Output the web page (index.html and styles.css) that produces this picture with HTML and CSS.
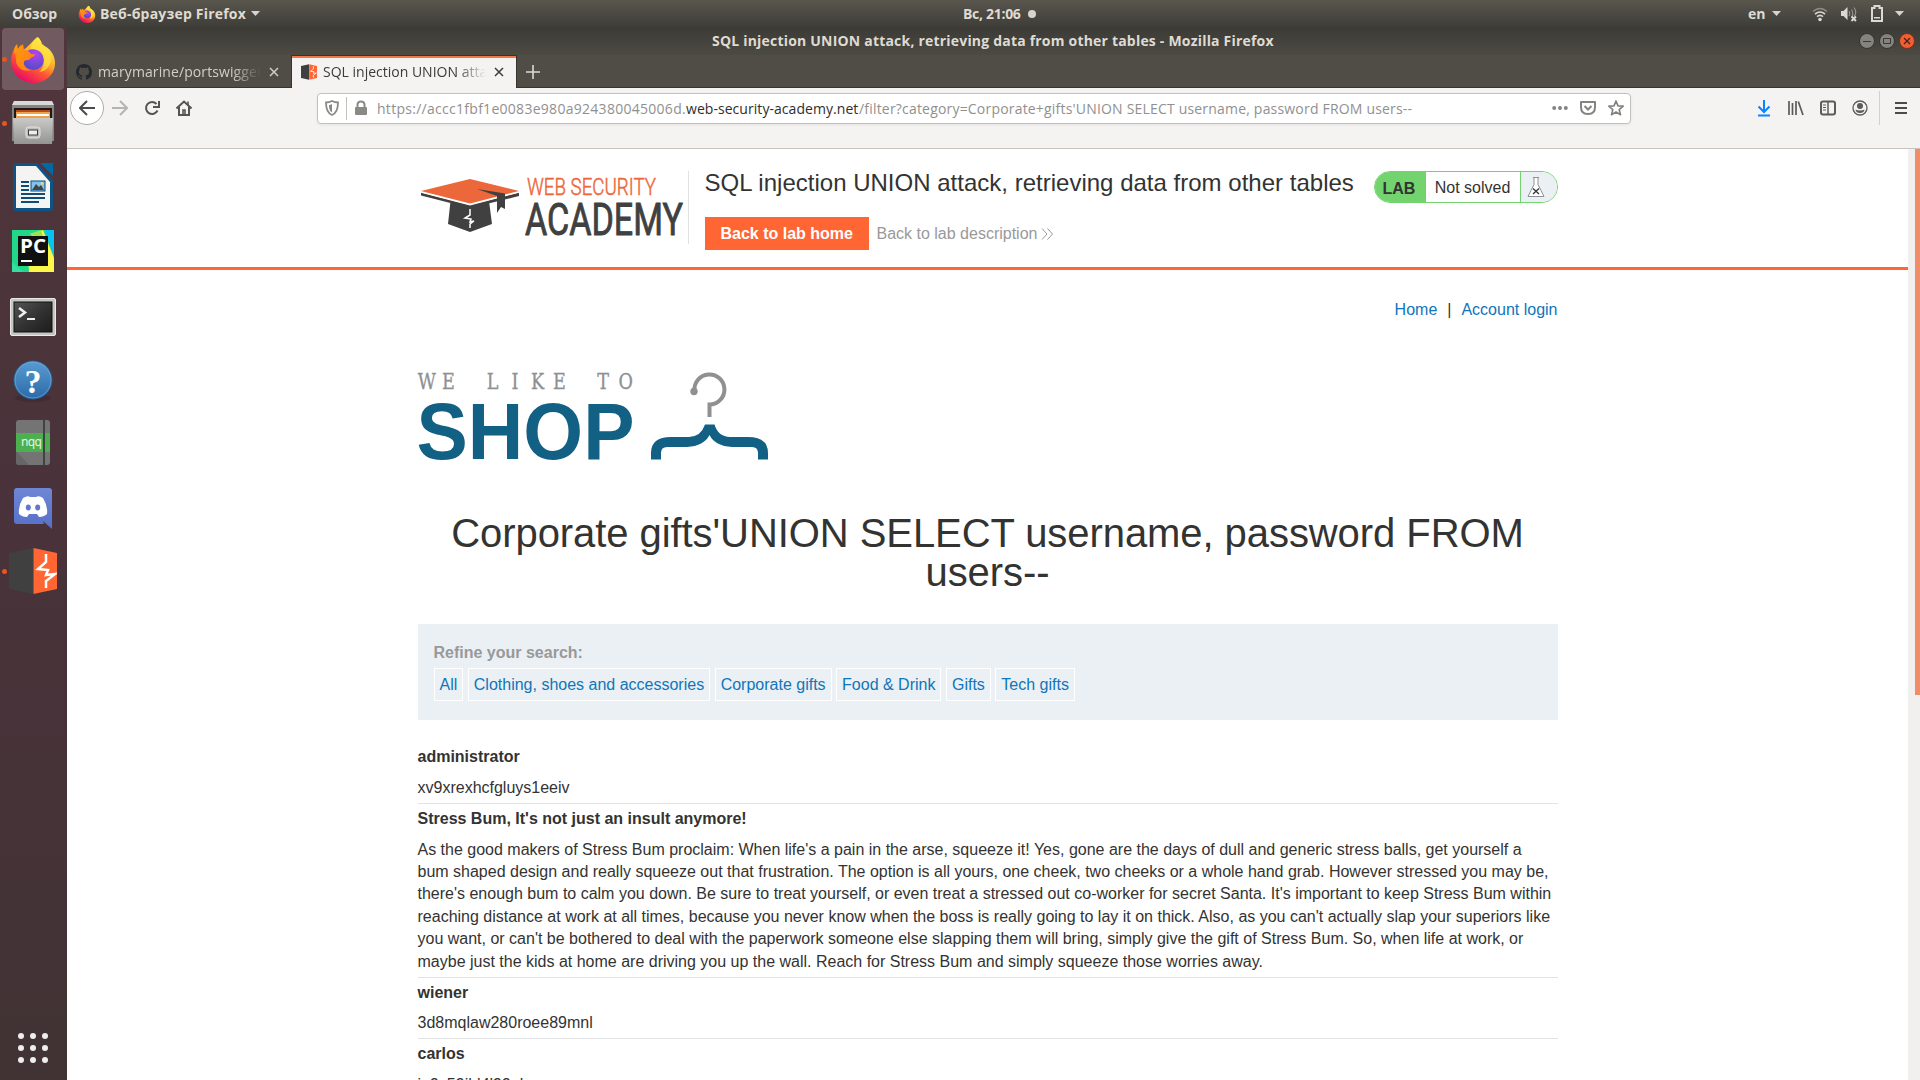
FILE: index.html
```html
<!DOCTYPE html>
<html lang="ru">
<head>
<meta charset="utf-8">
<title>SQL injection UNION attack, retrieving data from other tables</title>
<link rel="stylesheet" href="styles.css">
</head>
<body>
<svg class="defs" width="0" height="0" aria-hidden="true">
  <defs>
    <linearGradient id="ff-body" x1=".8" y1=".1" x2=".25" y2="1"><stop offset="0" stop-color="#fff44f"/><stop offset=".35" stop-color="#ffb02a"/><stop offset=".6" stop-color="#ff5634"/><stop offset="1" stop-color="#e5006e"/></linearGradient>
    <radialGradient id="ff-globe" cx=".6" cy=".25" r=".8"><stop offset="0" stop-color="#b343f2"/><stop offset="1" stop-color="#4b4dc4"/></radialGradient>
    <linearGradient id="ff-fox" x1="0" y1="0" x2="1" y2=".6"><stop offset="0" stop-color="#ff980e"/><stop offset="1" stop-color="#ff8116"/></linearGradient>
    <linearGradient id="steel" x2="0" y2="1"><stop offset="0" stop-color="#c9c9c8"/><stop offset="1" stop-color="#949493"/></linearGradient>
    <linearGradient id="term" x2="1" y2="1"><stop offset="0" stop-color="#555"/><stop offset=".5" stop-color="#333"/><stop offset="1" stop-color="#1c1c1c"/></linearGradient>
    <linearGradient id="help" x2="0" y2="1"><stop offset="0" stop-color="#5b9bd2"/><stop offset="1" stop-color="#2a6ba8"/></linearGradient>
    <linearGradient id="disc" x2="0" y2="1"><stop offset="0" stop-color="#6f86d4"/><stop offset="1" stop-color="#5570c8"/></linearGradient>
    <symbol id="firefox" viewBox="0 0 48 48">
      <path d="M29 2c2 2 4 5 4 8 7 2 13 9 13 18 0 12-10 20-21.500 20S2 39 2 26c0-6 2-11 5-15l1 4 4-5 2 5 3-2c4-3 6-7 12-11z" fill="url(#ff-body)"/>
      <circle cx="24.500" cy="24.500" r="10.500" fill="url(#ff-globe)"/>
      <path d="M5 16c0-3 1-5 3-7l1 5 5-5 1 6c3 0 5 1 7 4 2 0 4 0 4 1-1 2-4 2-5 4-2 2-5 0-6 3-1 4 3 8 8 8-9 3-16-3-16-10 0-4-1-6-2-9z" fill="url(#ff-fox)"/>
      <path d="M28 2c-4 4-6 7-6 12 7 0 13 4 13 12 0 5-2 9-5 11 8-1 12-7 12-14 0-7-6-10-8-14-1 1-5-2-6-7z" fill="#ffe141" opacity=".75"/>
    </symbol>
    <symbol id="burp" viewBox="0 0 48 46">
      <path d="M0 5 24 0v46L0 41z" fill="#404041"/><path d="M24.500 0 48 5v36l-23.500 5z" fill="#ff6633"/>
      <path d="M37 6v8l-8 7 10 1-2 5 9-1-9 7v7" fill="none" stroke="#fff" stroke-width="2.500"/>
    </symbol>
  </defs>
</svg>

<header class="panel">
  <span class="activities">Обзор</span>
  <svg class="app-icon" width="18" height="18"><use href="#firefox"/></svg>
  <span class="app-name">Веб-браузер Firefox</span>
  <i class="tri"></i>
  <div class="clock"><span class="clock-text">Вс, 21:06</span><i class="clock-dot"></i></div>
  <div class="tray">
    <span class="lang">en</span><i class="tri"></i>
    <svg class="tray-wifi" width="16" height="16" viewBox="0 0 16 16" fill="none" stroke="#dad9d6" stroke-width="1.600"><path d="M1 5.500q7-6 14 0" opacity=".45"/><path d="M3 8.200q5-4.400 10 0M5 10.700q3-2.600 6 0"/><circle cx="8" cy="13.500" r="1.800" fill="#dad9d6" stroke="none"/></svg>
    <svg class="tray-vol" width="18" height="16" viewBox="0 0 18 16"><path d="M1 5h2.500L7.500 1v13l-4-4H1z" fill="#dad9d6"/><path d="M9 5q1.500 2.500 0 5M11.500 3.500q2.500 4 0 8M14 1.500q3.500 5 0 9" fill="none" stroke="#dad9d6" stroke-width="1.200" opacity=".5"/><path d="m11.500 10.500 4.500 4.500m0-4.500-4.500 4.500" stroke="#dad9d6" stroke-width="1.800"/></svg>
    <svg class="tray-bat" width="12" height="17" viewBox="0 0 12 17"><path d="M1 3h2.500V1h5v2H11v13H1z" fill="none" stroke="#dad9d6" stroke-width="2"/><path d="M3 12h6v1.500H3z" fill="#dad9d6"/></svg>
    <i class="tri"></i>
  </div>
</header>

<div class="desktop">
  <nav class="dock">
    <div class="dock-item running focused"><svg width="48" height="48"><use href="#firefox"/></svg></div>
    <div class="dock-item running"><svg width="48" height="48" viewBox="0 0 48 48">
      <path d="M5 2h38l2 5v35H3V7z" fill="#858584"/><path d="M5 2h38l2 4H3z" fill="#d8d8d6"/><path d="M5 9h38v13H5z" fill="#201a16"/><path d="M7 11h34v9H7z" fill="#b9481d"/><path d="M7 13h34v7H7z" fill="#f0a04b"/><path d="M8 15h32v2H8z" fill="#fff"/><path d="M4 19h40l-1 26H5z" fill="url(#steel)"/>
      <rect x="17" y="28" width="14" height="11" rx="2.500" fill="#bfbfbe" stroke="#e4e4e3"/><rect x="19.500" y="31" width="9" height="5" fill="#eee" stroke="#3a3a3a"/></svg></div>
    <div class="dock-item"><svg width="48" height="48" viewBox="0 0 48 48">
      <path d="M7 0h24l13 13v32q0 3-3 3H7q-3 0-3-3V3q0-3 3-3z" fill="#0e5384"/><path d="M31 0h13v13z" fill="#0369a3"/><path d="M28 0h3l13 13v4z" fill="#53353b"/><path d="M7 3h20l14 16v26H7z" fill="#f4f4f3"/>
      <path d="M12 19h8M12 23h8M12 27h8M12 31h24M12 35h24M12 39h18" stroke="#0e4d7a" stroke-width="2"/><rect x="22" y="18" width="14" height="10" fill="#7fc3ee" stroke="#0e4d7a"/><path d="m23 27 4-6 3 3 2-2 3 5z" fill="#444"/><circle cx="33" cy="20.500" r="1.300" fill="#ffd75e"/></svg></div>
    <div class="dock-item"><svg width="48" height="48" viewBox="0 0 48 48">
      <path d="M3 3h42v42H3z" fill="#21d789"/><path d="M36 3h9v28z" fill="#07c3f2"/><path d="M18 11 34 3l11 28v14H20z" fill="#fcf84a"/><path d="M20 7 32 3l3 10z" fill="#9be34f"/><path d="M3 35 14 45H3z" fill="#34dfa0"/><path d="M9 9h30v30H9z" fill="#101010"/>
      <text x="11" y="26" class="pc-text" textLength="26" lengthAdjust="spacingAndGlyphs">PC</text><path d="M12 33h11v2H12z" fill="#fff"/></svg></div>
    <div class="dock-item"><svg width="48" height="48" viewBox="0 0 48 48">
      <rect x="1.500" y="7.500" width="45" height="37" rx="1.500" fill="#c6c6c5" stroke="#e8e8e7"/><rect x="5" y="11" width="38" height="30" fill="url(#term)" stroke="#111"/><path d="m10 17 6 4.500-6 4.500" fill="none" stroke="#eee" stroke-width="2.500"/><path d="M18 27h8v2h-8z" fill="#eee"/></svg></div>
    <div class="dock-item"><svg width="48" height="48" viewBox="0 0 48 48">
      <ellipse cx="24" cy="43" rx="18" ry="4" fill="#3a252b" opacity=".5"/><circle cx="24" cy="25" r="19" fill="url(#help)" stroke="#215f97"/><circle cx="24" cy="25" r="18" fill="none" stroke="#7db2de" opacity=".6"/><text x="24" y="37.500" class="help-text">?</text></svg></div>
    <div class="dock-item"><svg width="48" height="48" viewBox="0 0 48 48">
      <rect x="7" y="1" width="34" height="45" rx="3" fill="#747474"/><path d="M7 32 20 46H10q-3 0-3-3z" fill="#666"/><path d="M7 14h34v19H7z" fill="#4caf50"/><path d="M34 1h2v45h-2z" fill="#3f4440"/><text x="12" y="26.500" class="nqq-text" textLength="21">nqq</text></svg></div>
    <div class="dock-item"><svg width="48" height="48" viewBox="0 0 48 48">
      <path d="M8 5h32q3 0 3 3v38l-9-8 1 3H8q-3 0-3-3V8q0-3 3-3z" fill="url(#disc)"/><path d="M14 15q5-3 7-1h6q3-2 7 1 5 8 4 16-3 3-8 3l-2-3h-8l-2 3q-5 0-8-3-1-8 4-16z" fill="#fff"/><ellipse cx="19.300" cy="24.500" rx="2.500" ry="3" fill="#5f78cc"/><ellipse cx="28.700" cy="24.500" rx="2.500" ry="3" fill="#5f78cc"/></svg></div>
    <div class="dock-item running"><svg width="48" height="46"><use href="#burp"/></svg></div>
    <svg class="apps-grid" width="30" height="30" viewBox="0 0 30 30" fill="#eeeeec"><circle cx="3" cy="3" r="3"/><circle cx="15" cy="3" r="3"/><circle cx="27" cy="3" r="3"/><circle cx="3" cy="15" r="3"/><circle cx="15" cy="15" r="3"/><circle cx="27" cy="15" r="3"/><circle cx="3" cy="27" r="3"/><circle cx="15" cy="27" r="3"/><circle cx="27" cy="27" r="3"/></svg>
  </nav>

  <main class="window">
    <div class="titlebar">
      <span class="window-title">SQL injection UNION attack, retrieving data from other tables - Mozilla Firefox</span>
      <div class="window-buttons">
        <svg width="16" height="16" viewBox="0 0 16 16"><circle cx="8" cy="8" r="7.500" fill="#85837d" stroke="#34332f"/><path d="M4 8.500h8" stroke="#3a3935"/></svg>
        <svg width="16" height="16" viewBox="0 0 16 16"><circle cx="8" cy="8" r="7.500" fill="#85837d" stroke="#34332f"/><path d="M4.500 5.500h7v5h-7z" fill="none" stroke="#3a3935"/></svg>
        <svg width="16" height="16" viewBox="0 0 16 16"><circle cx="8" cy="8" r="7.500" fill="#ee6034" stroke="#7a3019"/><path d="m5 5 6 6m0-6-6 6" stroke="#4a2012" stroke-width="1.300"/></svg>
      </div>
    </div>
    <div class="tabs">
      <div class="tab">
        <svg width="16" height="16" viewBox="0 0 16 16"><path fill="#24292e" d="M8 0C3.580 0 0 3.580 0 8c0 3.540 2.290 6.530 5.470 7.590.4.070.55-.17.55-.38 0-.19-.010-.82-.010-1.490-2.010.37-2.530-.49-2.690-.94-.09-.23-.48-.94-.82-1.130-.28-.15-.68-.52-.010-.53.63-.010 1.080.58 1.230.82.72 1.210 1.870.87 2.330.66.070-.52.28-.87.51-1.070-1.780-.2-3.640-.89-3.640-3.950 0-.87.31-1.590.82-2.150-.08-.2-.36-1.020.08-2.120 0 0 .67-.21 2.200.82.64-.18 1.320-.27 2-.27s1.360.09 2 .27c1.530-1.040 2.200-.82 2.200-.82.44 1.100.16 1.920.08 2.120.51.56.82 1.270.82 2.150 0 3.070-1.870 3.750-3.650 3.950.29.25.54.73.54 1.480 0 1.070-.010 1.930-.010 2.200 0 .21.15.46.55.38A8.010 8.010 0 0 0 16 8c0-4.420-3.580-8-8-8z"/></svg>
        <span class="tab-label tab-one">marymarine/portswigger</span>
        <svg class="tab-close" width="10" height="10" viewBox="0 0 10 10"><path d="m1 1 8 8m0-8-8 8" stroke="currentColor" stroke-width="1.500"/></svg>
      </div>
      <div class="tab active">
        <svg width="16" height="16"><use href="#burp"/></svg>
        <span class="tab-label tab-two">SQL injection UNION attack</span>
        <svg class="tab-close" width="10" height="10" viewBox="0 0 10 10"><path d="m1 1 8 8m0-8-8 8" stroke="currentColor" stroke-width="1.500"/></svg>
      </div>
      <svg class="new-tab" width="14" height="14" viewBox="0 0 14 14"><path d="M7 0v14M0 7h14" stroke="#dcd9d2" stroke-width="1.600"/></svg>
    </div>
    <div class="toolbar">
      <div class="back"><svg width="16" height="16" viewBox="0 0 16 16" fill="none" stroke="#4c4b49" stroke-width="2"><path d="M16 8H1M8 1 1 8l7 7"/></svg></div>
      <svg class="forward" width="16" height="16" viewBox="0 0 16 16" fill="none" stroke="#b5b4b1" stroke-width="2"><path d="M0 8h15M8 1l7 7-7 7"/></svg>
      <svg class="reload" width="16" height="16" viewBox="0 0 16 16" fill="none" stroke="#555452" stroke-width="2"><path d="M13.500 10.500A6 6 0 1 1 12.500 4"/><path d="M15 1v6H9" /></svg>
      <svg class="home" width="16" height="16" viewBox="0 0 16 16" fill="none" stroke="#555452" stroke-width="2"><path d="M.5 8.500 8 1.500l7.500 7M3 7v8h10V7"/><path d="M7 15v-5h2v5M12 1.500V5" stroke-width="1.600"/></svg>
      <div class="urlbar">
        <svg class="shield" width="14" height="16" viewBox="0 0 14 16"><path d="M7 1q3 1.500 6 1.500C13 8.500 12 13 7 15 2 13 1 8.500 1 2.500 4 2.500 7 1 7 1z" fill="none" stroke="#8a8986" stroke-width="1.800"/><path d="M7 4v8.500C4.500 11 4 8.500 4 5q1.500 0 3-1z" fill="#8a8986"/></svg>
        <i class="url-sep"></i>
        <svg class="lock" width="14" height="16" viewBox="0 0 14 16"><path d="M3.500 8V5q0-3.500 3.500-3.500T10.500 5v3" fill="none" stroke="#8a8986" stroke-width="2"/><rect x="1" y="7" width="12" height="8" rx="1" fill="#8a8986"/></svg>
        <div class="url"><span class="url-a">https://accc1fbf1e0083e980a924380045006d.</span><span class="url-host">web-security-academy.net</span><span class="url-b">/filter?category=Corporate+gifts'UNION SELECT username, password FROM users--</span></div>
        <div class="url-actions">
          <svg width="16" height="16" viewBox="0 0 16 16" fill="#848380"><circle cx="2.200" cy="8" r="2"/><circle cx="8" cy="8" r="2"/><circle cx="13.800" cy="8" r="2"/></svg>
          <svg width="16" height="16" viewBox="0 0 16 16" fill="none" stroke="#848380" stroke-width="2"><path d="M1 2h14v5q0 7-7 7T1 7z" stroke-linejoin="round"/><path d="m4.500 6 3.500 3.500L11.500 6"/></svg>
          <svg width="16" height="16" viewBox="0 0 16 16" fill="none" stroke="#848380" stroke-width="1.700" stroke-linejoin="round"><path d="m8 1 2 4.800 5.200.4-4 3.400 1.300 5.100L8 12l-4.500 2.700 1.300-5.100-4-3.400L6 5.800z"/></svg>
        </div>
      </div>
      <div class="tools">
        <svg width="16" height="18" viewBox="0 0 16 18" fill="none" stroke="#0a84ff" stroke-width="2"><path d="M8 1v12M2.500 7.500 8 13l5.500-5.500M2 16.500h12"/></svg>
        <svg width="16" height="16" viewBox="0 0 16 16" fill="none" stroke="#5c5b59" stroke-width="1.700"><path d="M1 1v14M4.500 3v12M8 1v14M10.300 1.500 15 15"/></svg>
        <svg width="16" height="16" viewBox="0 0 16 16" fill="none" stroke="#5c5b59" stroke-width="2"><rect x="1" y="1.500" width="14" height="13" rx="2"/><path d="M8 2v12" stroke-width="1.500"/><path d="M3 5h3M3 7.500h3M3 10h3" stroke-width="1.200"/></svg>
        <svg width="16" height="16" viewBox="0 0 16 16"><circle cx="8" cy="8" r="7" fill="none" stroke="#5c5b59" stroke-width="1.300"/><circle cx="8" cy="6" r="3" fill="#5c5b59"/><path d="M3.500 9.500Q5 10.500 8 10.500t4.500-1q-.5 3.500-4.500 3.500T3.500 9.500z" fill="#5c5b59"/></svg>
        <i class="tools-sep"></i>
        <svg width="14" height="14" viewBox="0 0 14 14" stroke="#4c4b49" stroke-width="2"><path d="M1 2h12M1 7h12M1 12h12"/></svg>
      </div>
    </div>

    <div class="viewport">
      <div class="page">
        <section class="academy">
          <div class="container academy-row">
            <svg class="academy-logo" width="270" height="72" viewBox="418 171 270 72">
              <path d="M450.500 201 470 207l19-6 3 23-22 8-22-8z" fill="#404041"/>
              <path d="M421 192.500 470 205l49-12.500v3.500L470 208l-49-12.500z" fill="#404041"/>
              <path d="M420 191v1.500l50 13 50-13V191z" fill="#fff"/>
              <path d="M421 191 470 179l49 12-49 12.500z" fill="#ec683a"/>
              <path d="M477 189 505 193.500V209l-4-2-4 6v-17z" fill="#404041"/>
              <path d="M470 209v6l-5 3 6 1-1 3 4-1-4 3v4" fill="none" stroke="#fff" stroke-width="1.500"/>
              <text x="527" y="194.500" class="logo-web" textLength="129" lengthAdjust="spacingAndGlyphs">WEB SECURITY</text>
              <text x="525" y="234.500" class="logo-academy" textLength="158" lengthAdjust="spacingAndGlyphs">ACADEMY</text>
            </svg>
            <div class="lab-info">
              <h2>SQL injection UNION attack, retrieving data from other tables</h2>
              <div class="lab-links"><a class="button">Back to lab home</a><a class="desc-link">Back to lab description<svg width="13" height="12" viewBox="0 0 13 12" fill="none" stroke="#9a9a9a"><path d="m1 .5 5 5.500-5 5.500M6.500.5l5 5.500-5 5.500"/></svg></a></div>
            </div>
            <div class="lab-status"><b>LAB</b><span>Not solved</span><svg width="36" height="30" viewBox="0 0 36 30"><path d="M0 0h36v30H0z" fill="#eaf0f3"/><path d="M12 5.500h6M13 5.500v7L7 24.500h16l-6-12v-7" fill="#fff" stroke="#8e9294"/><path d="m12 16.500 6 5.500m0-5.500-6 5.500" stroke="#333" stroke-width="1.300"/></svg></div>
          </div>
        </section>
        <div class="container">
          <nav class="top-links"><a>Home</a><span>|</span><a>Account login</a></nav>
          <svg class="shop-logo" width="352" height="92" viewBox="418 370 352 92">
            <g transform="scale(.82 1)"><text class="shop-small" y="389" x="520.500 547 600.600 628 655.500 682.300 735.500 763">WELIKETO</text></g>
            <text x="416.500" y="459" class="shop-big" textLength="218" lengthAdjust="spacingAndGlyphs">SHOP</text>
            <path d="M694.500 391A15 15 0 1 1 709.500 404.500V417" fill="none" stroke="#8f9091" stroke-width="4"/><circle cx="694" cy="391.500" r="3.700" fill="#8f9091"/>
            <path d="M705 424.500h9.500Q718 436.500 730 437h18Q768 437 768 453v6.500h-10V453q0-6-6-6h-20Q715 446 709.500 435 704 446 687 447h-20q-6 0-6 6v6.500h-10V453q0-16 20-16h18Q701 436.500 705 424.500z" fill="#126084"/>
          </svg>
          <h1>Corporate gifts'UNION SELECT username, password FROM users--</h1>
          <section class="filters">
            <label>Refine your search:</label>
            <div class="filter-links"><a>All</a><a>Clothing, shoes and accessories</a><a>Corporate gifts</a><a>Food &amp; Drink</a><a>Gifts</a><a>Tech gifts</a></div>
          </section>
          <dl class="results">
            <dt>administrator</dt><dd>xv9xrexhcfgluys1eeiv</dd>
            <dt>Stress Bum, It's not just an insult anymore!</dt>
            <dd>As the good makers of Stress Bum proclaim: When life's a pain in the arse, squeeze it! Yes, gone are the days of dull and generic stress balls, get yourself a bum shaped design and really squeeze out that frustration. The option is all yours, one cheek, two cheeks or a whole hand grab. However stressed you may be, there's enough bum to calm you down. Be sure to treat yourself, or even treat a stressed out co-worker for secret Santa. It's important to keep Stress Bum within reaching distance at work at all times, because you never know when the boss is really going to lay it on thick. Also, as you can't actually slap your superiors like you want, or can't be bothered to deal with the paperwork someone else slapping them will bring, simply give the gift of Stress Bum. So, when life at work, or maybe just the kids at home are driving you up the wall. Reach for Stress Bum and simply squeeze those worries away.</dd>
            <dt>wiener</dt><dd>3d8mqlaw280roee89mnl</dd>
            <dt>carlos</dt><dd>ju9s59ihl4l99ul</dd>
          </dl>
        </div>
      </div>
      <div class="scrollbar"><i class="thumb"></i></div>
    </div>
  </main>
</div>
</body>
</html>
```
FILE: styles.css
```css
* { box-sizing: border-box; }
body { margin: 0; width: 1920px; height: 1080px; overflow: hidden; display: flex; flex-direction: column; background: #fff; color: #333332; font: 16px/1.4 "Liberation Sans", Arial, sans-serif; }
svg { display: block; flex: none; }
.defs { position: absolute; }

/* Desktop panel */
.panel { height: 27px; flex: none; display: grid; grid-template-columns: 66px 22px auto 9px 1fr auto; align-items: center; padding-left: 12px; background: linear-gradient(#59564d, #3e3d38); color: #dfdbd2; font: 700 14px/26px "Open Sans", sans-serif; }
.panel, .titlebar, .tabs, .toolbar { white-space: nowrap; }
.tri { display: block; width: 9px; height: 5px; background: #d6d4cf; clip-path: polygon(0 0, 100% 0, 50% 100%); }
.app-name { width: 151px; letter-spacing: .2px; }
.clock { display: flex; align-items: center; margin-left: 703px; }
.clock-text { width: 65px; letter-spacing: -.3px; }
.clock-dot { width: 8px; height: 8px; border-radius: 50%; background: #d6d4cf; }
.tray { display: flex; align-items: center; padding-right: 16px; }
.lang { width: 24px; }
.tray-wifi { margin-left: 31px; }
.tray-vol { margin-left: 12px; }
.tray-bat { margin: 0 12px 0 13px; }

.desktop { flex: 1; display: flex; min-height: 0; }

/* Dock */
.dock { width: 67px; flex: none; display: flex; flex-direction: column; align-items: center; background: linear-gradient(#50363c, #49323a 50%, #413334 98%); }
.dock-item { position: relative; width: 62px; height: 62px; margin: 1px 1px 1px 0; display: flex; align-items: center; justify-content: center; border-radius: 4px; }
.focused { background: #715b60; }
.running::before { content: ""; position: absolute; left: 0; top: 29px; width: 5px; height: 5px; border-radius: 50%; background: #ea5420; }
.apps-grid { margin: auto 1px 17px 0; }
.pc-text { font: 700 20px "Open Sans", sans-serif; fill: #fff; }
.help-text { font: 700 34px "Liberation Serif", serif; fill: #fff; text-anchor: middle; }
.nqq-text { font: 12px "Noto Sans", sans-serif; fill: #e6f4e6; }

/* Window chrome */
.window { flex: 1; display: flex; flex-direction: column; min-width: 0; }
.titlebar { height: 28px; flex: none; display: flex; align-items: center; background: linear-gradient(#3b3a36, #4d4a43); color: #dfdbd2; padding: 0 5px 0 645px; }
.window-title { font: 700 14px/28px "Open Sans", sans-serif; width: 570px; letter-spacing: .2px; }
.window-buttons { display: flex; gap: 4px; margin-left: auto; }
.tabs { height: 33px; flex: none; display: flex; background: #504d46; box-shadow: inset 0 -1px #36342f; font: 14px/20px "Open Sans", sans-serif; }
.tab { display: flex; align-items: center; width: 224px; padding-left: 9px; color: #d2cfc7; }
.tab-label { width: 163px; margin: 0 8px 0 6px; overflow: hidden; -webkit-mask-image: linear-gradient(90deg, #000 82%, transparent); mask-image: linear-gradient(90deg, #000 82%, transparent); }
.tab-one { letter-spacing: .1px; }
.active { width: 226px; background: #f4f3f1; color: #3c3b39; border: 1px solid #36342f; border-width: 1px 1px 0; box-shadow: inset 0 2px #f07746; }
.active .tab-label { margin-top: -1px; }
.new-tab { align-self: center; margin-left: 9px; }
.toolbar { height: 61px; flex: none; display: flex; align-items: center; padding: 0 12px 20px 3px; background: #f4f3f1; border-bottom: 1px solid #c6c4c1; }
.back { width: 34px; height: 34px; border: 1px solid #aeaca8; border-radius: 50%; background: #fff; display: flex; align-items: center; justify-content: center; }
.forward { margin-left: 8px; }
.reload, .home { margin-left: 16px; }
.urlbar { width: 1314px; height: 31px; margin-left: 125px; display: flex; align-items: center; padding: 0 6px 0 7px; background: #fff; border: 1px solid #c3c1bd; border-radius: 4px; box-shadow: 0 1px 3px #0001; font: 14px "Open Sans", sans-serif; color: #919090; }
.url-sep { width: 1px; height: 23px; background: #c3c1bd; margin: 0 7px 0 7px; }
.url { display: flex; margin-left: 9px; }
.url-a { width: 309px; letter-spacing: .28px; }
.url-host { width: 173px; letter-spacing: .05px; color: #2f2e2c; }
.url-b { width: 554px; letter-spacing: .19px; }
.url-actions { display: flex; gap: 12px; margin-left: auto; }
.tools { display: flex; align-items: center; gap: 16px; margin-left: auto; }
.tools-sep { width: 1px; height: 34px; background: #d2d0cd; margin: 0 -2px 0 -5px; }

/* Web page */
.viewport { flex: 1; display: flex; min-height: 0; }
.page { flex: 1; overflow: hidden; background: #fff; }
.scrollbar { width: 12px; padding-left: 7px; background: #f1f0ee; }
.thumb { display: block; height: 546px; background: #f18c69; }
.container { width: 1140px; margin: 0 auto; }
.academy { height: 121px; border-bottom: 3px solid #ff6633; padding-top: 22px; }
.academy-row { display: flex; align-items: flex-start; }
.academy-logo, .shop-logo { overflow: visible; }
.lab-info { border-left: 1px solid #e1e1e1; height: 73px; padding-left: 16px; flex: 1; }
.lab-info h2 { margin: 0; font-size: 24px; font-weight: 400; line-height: 24px; letter-spacing: .01px; white-space: nowrap; }
.lab-links { display: flex; align-items: center; margin-top: 22px; }
.button { height: 33px; line-height: 33px; padding: 0 16px; background: #ff6633; color: #fff; font-weight: 700; }
.desc-link { display: flex; align-items: center; gap: 4px; margin: 1px 0 0 7.500px; color: #999; }
.lab-status { height: 32px; display: flex; border: 1px solid #72d36f; border-radius: 16px; overflow: hidden; line-height: 31px; }
.lab-status b { width: 51px; padding-left: 8px; line-height: 33px; background: #72d36f; }
.lab-status span { width: 95px; text-align: center; border-right: 1px solid #72d36f; }
.top-links { display: flex; justify-content: flex-end; gap: 10px; margin-top: 29px; }
.top-links a, .filter-links a { color: #0f75bc; }
.shop-logo { margin-top: 49px; }
.logo-web { font: 300 23.500px "Roboto", sans-serif; fill: #ec683a; stroke: #ec683a; stroke-width: .5px; }
.logo-academy { font: 400 45px "Roboto", sans-serif; fill: #404041; stroke: #404041; stroke-width: .9px; stroke-linejoin: round; }
.shop-small { font: 21.500px "DejaVu Serif", serif; fill: #8f9091; stroke: #8f9091; stroke-width: .3px; text-anchor: middle; }
.shop-big { font: 700 80.500px "Liberation Sans", sans-serif; fill: #126084; }
h1 { margin: 52px 0 32px; font-size: 40px; font-weight: 400; line-height: 39px; letter-spacing: -.07px; text-align: center; }
.filters { height: 96px; padding: 17px 16px 0; background: #eaf0f3; }
.filters label { display: block; height: 23px; line-height: 23px; color: #999; font-weight: 700; }
.filter-links { display: flex; gap: 4.500px; margin-top: 3.500px; }
.filter-links a { height: 33px; line-height: 32px; padding: 0 5px; border: 1px solid #fff; }
.results { margin: 21.800px 0 0; }
.results dt { padding: 4px 0; font-weight: 700; }
.results dd { margin: 0; padding: 4.300px 2px 3.700px 0; border-bottom: 1px solid #e1e3e4; }
```
